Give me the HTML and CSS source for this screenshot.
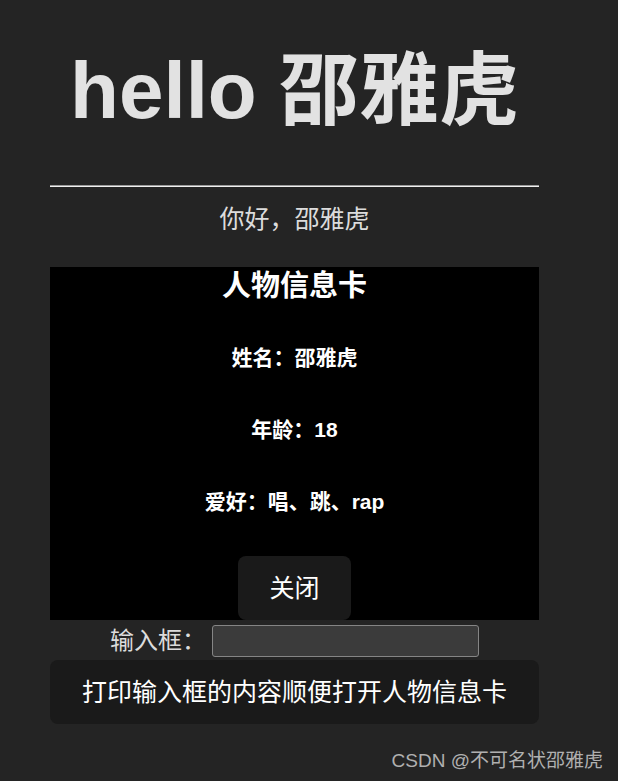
FILE: index.html
```html
<!DOCTYPE html>
<html lang="zh-CN">
<head>
<meta charset="utf-8">
<title>hello 邵雅虎</title>
<link rel="stylesheet" href="styles.css">
</head>
<body>
<div class="app">
  <h1 class="title">hello 邵雅虎</h1>
  <hr class="rule">
  <p class="greet">你好，邵雅虎</p>
  <section class="card">
    <h2 class="card-title">人物信息卡</h2>
    <h3 class="card-line first">姓名：邵雅虎</h3>
    <h3 class="card-line">年龄：18</h3>
    <h3 class="card-line">爱好：唱、跳、rap</h3>
    <button class="btn btn-close">关闭</button>
  </section>
  <div class="input-row">
    <label class="input-label" for="box">输入框：</label>
    <input class="input-box" id="box" type="text">
  </div>
  <button class="btn btn-wide">打印输入框的内容顺便打开人物信息卡</button>
</div>
<div class="watermark">CSDN @不可名状邵雅虎</div>
</body>
</html>
```

FILE: styles.css
```css
html, body {
  margin: 0;
  padding: 0;
  background: #242424;
  height: 100%;
}
body {
  font-family: "Liberation Sans", "Noto Sans CJK SC", sans-serif;
  color: rgba(255, 255, 255, 0.87);
  position: relative;
}
.app {
  width: 489px;
  margin-left: 50px;
  padding-top: 47px;
  display: flex;
  flex-direction: column;
  align-items: stretch;
}
.title {
  margin: 0;
  font-size: 80px;
  line-height: 88px;
  font-weight: 700;
  text-align: center;
  color: #e2e2e2;
}
.rule {
  margin: 50px 0 0;
  height: 0;
  border: 0;
  border-top: 1px solid #9a9a9a;
  border-bottom: 1px solid #f0f0f0;
}
.greet {
  margin: 16px 0 0;
  font-size: 25px;
  line-height: 32px;
  text-align: center;
  color: #dcdcdc;
}
.card {
  margin-top: 32px;
  background: #000;
  height: 353px;
  display: flex;
  flex-direction: column;
  align-items: center;
  color: #fff;
  padding-top: 1px;
  box-sizing: border-box;
}
.card-title {
  margin: 0;
  font-size: 29px;
  line-height: 36px;
  font-weight: 700;
}
.card-line {
  margin: 45px 0 0;
  font-size: 21px;
  line-height: 27px;
  font-weight: 700;
}
.card-line.first {
  margin-top: 40px;
}
.btn {
  font-family: inherit;
  background: #1a1a1a;
  color: #fff;
  border: 0;
  border-radius: 8px;
  font-size: 25px;
  line-height: 34px;
  padding: 15px 30px;
}
.btn-close {
  margin-top: 41px;
  width: 113px;
  height: 64px;
  padding: 0;
}
.input-row {
  margin-top: 5px;
  height: 32px;
  display: flex;
  justify-content: center;
  align-items: center;
  gap: 6px;
}
.input-label {
  font-size: 24px;
  line-height: 32px;
  color: #dcdcdc;
}
.input-box {
  width: 267px;
  height: 32px;
  box-sizing: border-box;
  background: #3b3b3b;
  border: 1px solid #858585;
  border-radius: 3px;
  color: #fff;
  margin: 0;
}
.btn-wide {
  margin-top: 3px;
  height: 64px;
  width: 100%;
  padding: 0;
}
.watermark {
  position: absolute;
  right: 15px;
  top: 748px;
  font-size: 19px;
  line-height: 26px;
  color: #b0b0b0;
}
```
